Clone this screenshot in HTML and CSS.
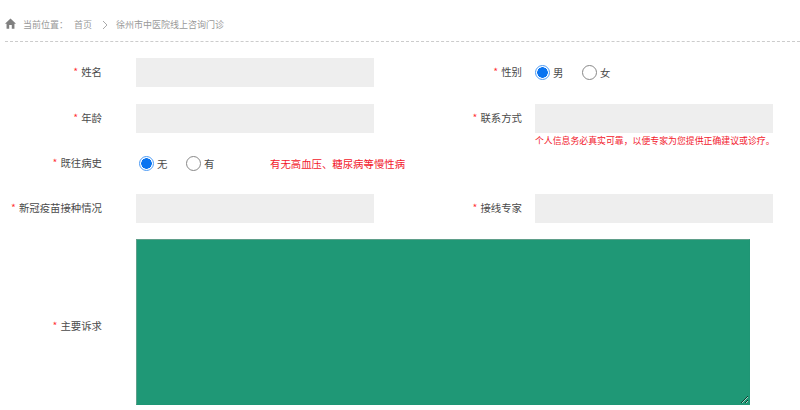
FILE: index.html
```html
<!DOCTYPE html>
<html lang="zh">
<head>
<meta charset="utf-8">
<title>徐州市中医院线上咨询门诊</title>
<link rel="stylesheet" href="styles.css">
</head>
<body>
<nav class="crumbs">
  <svg class="home" viewBox="0 0 12 12" width="11" height="11" aria-hidden="true"><path d="M6 .6 L12 6.2 L10.3 6.2 L10.3 11.6 L7.4 11.6 L7.4 7.6 L4.6 7.6 L4.6 11.6 L1.7 11.6 L1.7 6.2 L0 6.2 Z"/></svg>
  <span class="here">当前位置：</span>
  <a class="crumb">首页</a>
  <svg class="sep" viewBox="0 0 6 10" width="6" height="10" aria-hidden="true"><path d="M1 1 L5 5 L1 9" fill="none"/></svg>
  <a class="crumb">徐州市中医院线上咨询门诊</a>
</nav>
<form class="form">
  <div class="row row-1">
    <div class="field">
      <label class="label"><i>*</i>姓名</label>
      <input class="input" type="text">
    </div>
    <div class="field field-right">
      <label class="label"><i>*</i>性别</label>
      <div class="radios">
        <label class="radio"><input type="radio" name="sex" checked>男</label>
        <label class="radio"><input type="radio" name="sex">女</label>
      </div>
    </div>
  </div>
  <div class="row row-2">
    <div class="field">
      <label class="label"><i>*</i>年龄</label>
      <input class="input" type="text">
    </div>
    <div class="field field-right">
      <label class="label"><i>*</i>联系方式</label>
      <div class="stack">
        <input class="input" type="text">
        <p class="note">个人信息务必真实可靠，以便专家为您提供正确建议或诊疗。</p>
      </div>
    </div>
  </div>
  <div class="row row-3">
    <div class="field">
      <label class="label"><i>*</i>既往病史</label>
      <div class="radios radios-history">
        <label class="radio"><input type="radio" name="his" checked>无</label>
        <label class="radio"><input type="radio" name="his">有</label>
        <span class="hint">有无高血压、糖尿病等慢性病</span>
      </div>
    </div>
  </div>
  <div class="row row-4">
    <div class="field">
      <label class="label"><i>*</i>新冠疫苗接种情况</label>
      <input class="input" type="text">
    </div>
    <div class="field field-right">
      <label class="label"><i>*</i>接线专家</label>
      <input class="input" type="text">
    </div>
  </div>
  <div class="row row-5">
    <div class="field">
      <label class="label"><i>*</i>主要诉求</label>
      <textarea class="area"></textarea>
    </div>
  </div>
</form>
</body>
</html>
```
FILE: styles.css
```css
* { box-sizing: border-box; }
html, body { margin: 0; padding: 0; }
body {
  width: 800px;
  height: 410px;
  overflow: hidden;
  background: #fff;
  font-family: "Noto Sans CJK SC", "Liberation Sans", sans-serif;
  color: #4a4a4a;
}
.crumbs {
  display: flex;
  align-items: center;
  height: 42px;
  margin-left: 5px;
  padding-top: 8px;
  border-bottom: 1px dashed #ccc;
  font-size: 9px;
  color: #999;
}
.home { fill: #808080; margin: -2px 7px 0 0; }
.here { margin-right: 6px; }
.sep { stroke: #aaa; margin: 0 8px 0 10px; }
.form { display: flex; flex-direction: column; padding-top: 16px; }
.row { display: flex; }
.row-1 { height: 46px; }
.row-2 { height: 45px; }
.row-3 { height: 45px; }
.row-4 { height: 45px; }
.field { display: flex; align-items: flex-start; width: 400px; }
.label {
  flex: none;
  width: 102px;
  height: 29px;
  margin-right: 34px;
  padding-bottom: 2px;
  display: flex;
  align-items: center;
  justify-content: flex-end;
  font-size: 10.4px;
  white-space: nowrap;
}
.field-right .label { width: 122px; margin-right: 13px; }
.label i { color: #f33; font-style: normal; margin-right: 3px; }
.input {
  display: block;
  width: 238px;
  height: 29px;
  border: 0;
  padding: 0;
  margin: 0;
  background: #eee;
}
.stack { width: 238px; }
.note {
  margin: 1px 0 0;
  font-size: 8.9px;
  line-height: 13px;
  color: #f2182c;
  white-space: nowrap;
}
.radios { display: flex; align-items: center; height: 29px; padding-bottom: 1px; gap: 12px; }
.radio {
  display: flex;
  align-items: center;
  gap: 3px;
  font-size: 10.4px;
  line-height: 15px;
  width: 35px;
}
.radio input {
  appearance: none;
  width: 15px;
  height: 15px;
  margin: 0;
  border: 1px solid #888;
  border-radius: 50%;
  background: #fff;
}
.radio input:checked {
  border: 1px solid #4d9bf5;
  background: radial-gradient(circle, #0a74f0 0 5px, #fff 5.5px);
}
.radios-history { margin-left: 3px; }
.hint { margin-left: 37px; font-size: 10.4px; color: #f2182c; white-space: nowrap; }
.row-5 .field { width: 100%; }
.row-5 .label { margin-top: 73px; }
.area {
  display: block;
  width: 614px;
  height: 166px;
  margin: 0;
  padding: 0;
  border: 1px solid #1f9675;
  border-color: #5f9f8a #1f9675 #1f9675 #5f9f8a;
  background: #1f9876;
}
```
